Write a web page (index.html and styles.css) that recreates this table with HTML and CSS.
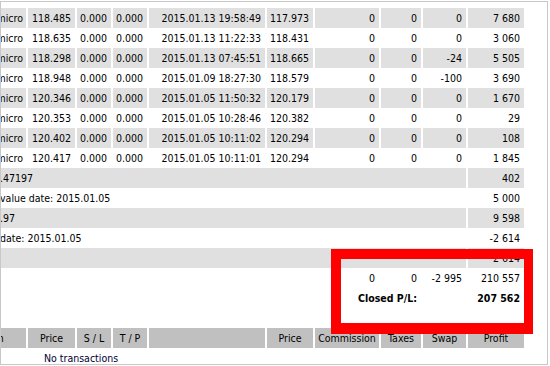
FILE: index.html
```html
<!DOCTYPE html>
<html>
<head>
<meta charset="utf-8">
<title>Statement</title>
<link rel="stylesheet" href="styles.css">
</head>
<body>
<div class="frame">
  <div class="report">
    <div class="row alt"><div class="c item">usdjpymicro</div><div class="c">118.485</div><div class="c">0.000</div><div class="c">0.000</div><div class="c">2015.01.13 19:58:49</div><div class="c">117.973</div><div class="c">0</div><div class="c">0</div><div class="c">0</div><div class="c">7 680</div></div>
    <div class="row"><div class="c item">usdjpymicro</div><div class="c">118.635</div><div class="c">0.000</div><div class="c">0.000</div><div class="c">2015.01.13 11:22:33</div><div class="c">118.431</div><div class="c">0</div><div class="c">0</div><div class="c">0</div><div class="c">3 060</div></div>
    <div class="row alt"><div class="c item">usdjpymicro</div><div class="c">118.298</div><div class="c">0.000</div><div class="c">0.000</div><div class="c">2015.01.13 07:45:51</div><div class="c">118.665</div><div class="c">0</div><div class="c">0</div><div class="c">-24</div><div class="c">5 505</div></div>
    <div class="row"><div class="c item">usdjpymicro</div><div class="c">118.948</div><div class="c">0.000</div><div class="c">0.000</div><div class="c">2015.01.09 18:27:30</div><div class="c">118.579</div><div class="c">0</div><div class="c">0</div><div class="c">-100</div><div class="c">3 690</div></div>
    <div class="row alt"><div class="c item">usdjpymicro</div><div class="c">120.346</div><div class="c">0.000</div><div class="c">0.000</div><div class="c">2015.01.05 11:50:32</div><div class="c">120.179</div><div class="c">0</div><div class="c">0</div><div class="c">0</div><div class="c">1 670</div></div>
    <div class="row"><div class="c item">usdjpymicro</div><div class="c">120.353</div><div class="c">0.000</div><div class="c">0.000</div><div class="c">2015.01.05 10:28:46</div><div class="c">120.382</div><div class="c">0</div><div class="c">0</div><div class="c">0</div><div class="c">29</div></div>
    <div class="row alt"><div class="c item">usdjpymicro</div><div class="c">120.402</div><div class="c">0.000</div><div class="c">0.000</div><div class="c">2015.01.05 10:11:02</div><div class="c">120.294</div><div class="c">0</div><div class="c">0</div><div class="c">0</div><div class="c">108</div></div>
    <div class="row"><div class="c item">usdjpymicro</div><div class="c">120.417</div><div class="c">0.000</div><div class="c">0.000</div><div class="c">2015.01.05 10:11:01</div><div class="c">120.294</div><div class="c">0</div><div class="c">0</div><div class="c">0</div><div class="c">1 845</div></div>
    <div class="row alt"><div class="c note">.47197</div><div class="c">402</div></div>
    <div class="row"><div class="c note">value date: 2015.01.05</div><div class="c">5 000</div></div>
    <div class="row alt"><div class="c note">.97</div><div class="c">9 598</div></div>
    <div class="row"><div class="c note">date: 2015.01.05</div><div class="c">-2 614</div></div>
    <div class="row alt"><div class="c note"></div><div class="c">2 614</div></div>
    <div class="row totals"><div class="c from-g">0</div><div class="c">0</div><div class="c">-2 995</div><div class="c">210 557</div></div>
    <div class="row totals strong"><div class="c from-g span2">Closed P/L:</div><div class="c"></div><div class="c">207 562</div></div>
    <div class="row spacer"><div class="c full"></div></div>
    <div class="row head"><div class="c">Item</div><div class="c">Price</div><div class="c">S / L</div><div class="c">T / P</div><div class="c"></div><div class="c">Price</div><div class="c">Commission</div><div class="c">Taxes</div><div class="c">Swap</div><div class="c">Profit</div></div>
    <div class="row"><div class="c empty">No transactions</div></div>
  </div>
  <div class="highlight"></div>
</div>
</body>
</html>
```

FILE: styles.css
```css
html, body {
  margin: 0;
  padding: 0;
  background: #ffffff;
}

body {
  font-family: "DejaVu Sans Condensed", "DejaVu Sans", sans-serif;
  font-size: 10.5px;
  color: #000000;
}

.frame {
  position: relative;
  margin-top: 1px;
  width: 548px;
  height: 364px;
  box-sizing: border-box;
  border: 1px solid #c8c8c8;
  overflow: hidden;
}

.report {
  display: grid;
  grid-template-columns: 66px 47px 34px 34px 116px 46px 64px 40px 43px 56px;
  grid-auto-rows: 20px;
  column-gap: 2px;
  margin-top: 6px;
  margin-left: -41px;
  width: max-content;
}

.row {
  display: contents;
}

.c {
  line-height: 20px;
  padding: 0 4px 0 3px;
  text-align: right;
  white-space: nowrap;
  overflow: hidden;
}

.row.alt .c {
  background: #e0e0e0;
}

.c.item {
  padding-right: 3px;
}

.c.note {
  grid-column: 1 / span 9;
  text-align: left;
  padding-left: 40px;
}

.c.from-g {
  grid-column: 7;
}

.c.span2 {
  grid-column: 7 / span 2;
}

.row.strong .c {
  font-weight: bold;
}

.c.full {
  grid-column: 1 / -1;
}

.row.head .c {
  background: #c0c0c0;
  text-align: center;
  padding: 0 2px;
}

.c.empty {
  grid-column: 1 / -1;
  text-align: left;
  padding-left: 84px;
  color: #000033;
}

.highlight {
  position: absolute;
  left: 330px;
  top: 247px;
  width: 202px;
  height: 85px;
  box-sizing: border-box;
  border-style: solid;
  border-color: #ff0000;
  border-width: 10px 9px 11px 10px;
}
```
